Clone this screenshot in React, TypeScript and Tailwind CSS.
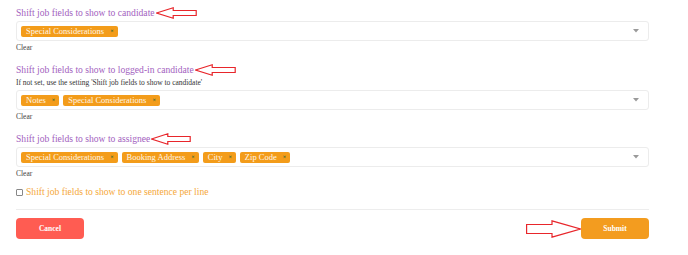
import React from "react";

const serif = { fontFamily: '"Liberation Serif", "Times New Roman", serif' };

function LeftArrow({ w }: { w: number }) {
  return (
    <svg width={w} height={12} viewBox={`0 0 ${w} 12`} className="ml-[1px]">
      <polygon
        points={`0.5,6 ${w * 0.42},0.8 ${w * 0.42},3.5 ${w - 0.8},3.5 ${w - 0.8},8.5 ${w * 0.42},8.5 ${w * 0.42},11.2`}
        fill="white"
        stroke="#e8262b"
        strokeWidth="1.2"
      />
    </svg>
  );
}

function Tag({ label }: { label: string }) {
  return (
    <span className="inline-flex h-[11px] items-center rounded-[2px] bg-[#f39c1a] pl-[5px] pr-[4px] text-[8.5px] leading-none text-[#fff7e8]">
      <span>{label}</span>
      <span className="ml-[6px] text-[6px] font-bold text-[#3d6b33]">×</span>
    </span>
  );
}

function Select({ tags }: { tags: string[] }) {
  return (
    <div className="flex h-[20px] w-full items-center rounded-[3px] border border-[#ececec] pl-[4px] pr-[9px]">
      <div className="flex flex-1 gap-[4px]">
        {tags.map((t) => (
          <Tag key={t} label={t} />
        ))}
      </div>
      <svg width="6" height="4" viewBox="0 0 6 4">
        <polygon points="0,0 6,0 3,3.5" fill="#9a9a9a" />
      </svg>
    </div>
  );
}

function Label({ text, arrow }: { text: string; arrow: number }) {
  return (
    <div className="flex h-[14px] items-center text-[9.6px] leading-[14px] text-[#a35fc0]">
      <span>{text}</span>
      <LeftArrow w={arrow} />
    </div>
  );
}

function Clear() {
  return <div className="h-[10px] text-[7.5px] leading-[10px] text-[#444]">Clear</div>;
}

export default function App() {
  return (
    <div className="h-[255px] w-[688px] bg-white" style={serif}>
      <div className="ml-[16px] w-[633px] pt-[6px]">
        <Label text="Shift job fields to show to candidate" arrow={41} />
        <div className="mt-[1px]">
          <Select tags={["Special Considerations"]} />
        </div>
        <div className="mt-[2px]">
          <Clear />
        </div>

        <div className="mt-[10px]">
          <Label text="Shift job fields to show to logged-in candidate" arrow={41} />
        </div>
        <div className="mt-[1px] h-[10px] text-[7.5px] leading-[10px] text-[#333]">
          If not set, use the setting 'Shift job fields to show to candidate'
        </div>
        <div className="mt-[2px]">
          <Select tags={["Notes", "Special Considerations"]} />
        </div>
        <div className="mt-[2px]">
          <Clear />
        </div>

        <div className="mt-[10px]">
          <Label text="Shift job fields to show to assignee" arrow={40} />
        </div>
        <div className="mt-[1px]">
          <Select tags={["Special Considerations", "Booking Address", "City", "Zip Code"]} />
        </div>
        <div className="mt-[2px]">
          <Clear />
        </div>

        <div className="mt-[6px] flex h-[14px] items-center gap-[3px]">
          <span className="inline-block h-[7px] w-[7px] rounded-[1px] border border-[#888] bg-white" />
          <span className="text-[9.6px] leading-[14px] text-[#f5a83a]">
            Shift job fields to show to one sentence per line
          </span>
        </div>

        <div className="mt-[10px] border-t border-[#ededed]" />

        <div className="mt-[8px] flex items-center justify-between">
          <button className="flex h-[21px] w-[68px] items-center justify-center rounded-[4px] bg-[#ff5c52] text-[7.5px] font-bold text-white">
            Cancel
          </button>
          <div className="flex items-center">
            <svg width="55" height="18" viewBox="0 0 55 18">
              <polygon
                points="0.6,4.5 26,4.5 26,0.8 54.4,9 26,17.2 26,13.5 0.6,13.5"
                fill="white"
                stroke="#e8262b"
                strokeWidth="1.2"
              />
            </svg>
            <button className="flex h-[21px] w-[68px] items-center justify-center rounded-[4px] bg-[#f39c1f] text-[7.5px] font-bold text-white">
              Submit
            </button>
          </div>
        </div>
      </div>
    </div>
  );
}
